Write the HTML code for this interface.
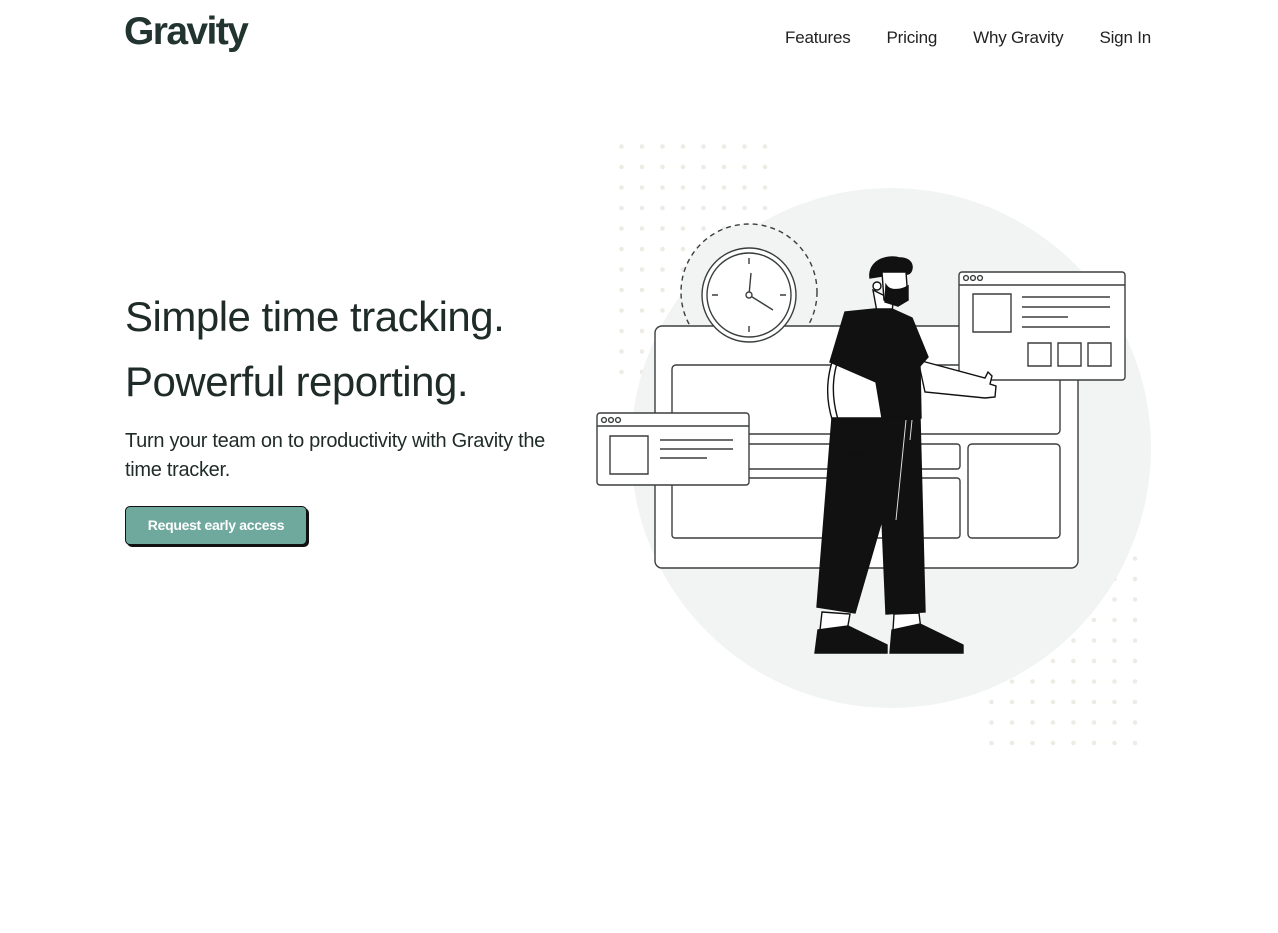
<!DOCTYPE html>
<html><head><meta charset="utf-8"><style>
*{margin:0;padding:0;box-sizing:border-box}
body{width:1278px;height:933px;background:#fff;font-family:"Liberation Sans",sans-serif;color:#1f2b28;position:relative;overflow:hidden}
.logo{position:absolute;left:124px;top:10px;font-size:39px;font-weight:bold;color:#223430;letter-spacing:-1.6px}
nav{position:absolute;top:28px;right:127px;display:flex;gap:36px;font-size:17px;color:#222}
nav a{color:#222;text-decoration:none;letter-spacing:-0.2px}
h1{position:absolute;left:125px;font-weight:normal;font-size:42px;letter-spacing:-0.5px;color:#1f2b28}
.p{position:absolute;left:125px;top:427px;width:440px;font-size:20px;line-height:29px;letter-spacing:-0.3px;color:#1f2b28}
.btn{position:absolute;left:125px;top:506px;width:182px;height:39px;background:#6fa89d;border:1.5px solid #111;border-radius:5px;box-shadow:2px 2px 0 #111;color:#fff;font-weight:bold;font-size:14px;text-align:center;line-height:36px;letter-spacing:-0.3px}
svg{position:absolute;left:0;top:0}
</style></head><body>
<div class="logo">Gravity</div>
<nav><a>Features</a><a>Pricing</a><a>Why Gravity</a><a>Sign In</a></nav>
<h1 style="top:293px">Simple time tracking.</h1>
<h1 style="top:358px">Powerful reporting.</h1>
<div class="p">Turn your team on to productivity with Gravity the time tracker.</div>
<div class="btn">Request early access</div>
<svg width="1278" height="933" viewBox="0 0 1278 933">
<defs>
<pattern id="d" x="619" y="144" width="20.5" height="20.5" patternUnits="userSpaceOnUse"><circle cx="2.5" cy="2.5" r="2.3" fill="#eeebe5"/></pattern>
<pattern id="d2" x="989" y="556" width="20.5" height="20.5" patternUnits="userSpaceOnUse"><circle cx="2.5" cy="2.5" r="2.3" fill="#eeebe5"/></pattern>
</defs>
<rect x="619" y="144" width="150" height="240" fill="url(#d)"/>
<polygon points="1110,556 1140,556 1140,746 989,746 989,660 1110,600" fill="url(#d2)"/>
<circle cx="891" cy="448" r="260" fill="#f1f4f3"/>
<g fill="none" stroke="#3a3f3d" stroke-width="1.4">
<circle cx="749" cy="292" r="68" stroke-dasharray="5 4" fill="#f1f4f3"/>
<rect x="655" y="326" width="423" height="242" rx="7" fill="#fff"/>
<rect x="672" y="365" width="388" height="69" rx="4"/>
<rect x="672" y="444" width="288" height="25" rx="3"/>
<rect x="672" y="478" width="288" height="60" rx="3"/>
<rect x="968" y="444" width="92" height="94" rx="4"/>
<circle cx="749" cy="295" r="47" fill="#fff"/>
<circle cx="749" cy="295" r="42"/>
<path d="M749 258v6M749 326v6M712 295h6M780 295h6M749 295l2-22M749 295l24 15"/>
<circle cx="749" cy="295" r="3" fill="#fff"/>
<rect x="597" y="413" width="152" height="72" rx="3" fill="#fff"/>
<path d="M597 426h152M610 436h38v38h-38zM660 440h73M660 449h73M660 458h47"/>
<circle cx="604" cy="420" r="2.4"/><circle cx="611" cy="420" r="2.4"/><circle cx="618" cy="420" r="2.4"/>
<rect x="959" y="272" width="166" height="108" rx="3" fill="#fff"/>
<path d="M959 285h166M973 294h38v38h-38zM1022 297h88M1022 307h88M1022 317h46M1022 327h88M1028 343h23v23h-23zM1058 343h23v23h-23zM1088 343h23v23h-23z"/>
<circle cx="966" cy="278" r="2.4"/><circle cx="973" cy="278" r="2.4"/><circle cx="980" cy="278" r="2.4"/>
</g>
<g stroke="#111" stroke-width="1.4">
<path d="M918 360 L985 378 L988 372 L992 376 L990 384 L996 386 L995 397 L985 398 L925 392 Z" fill="#fff"/>
<path d="M838 360 C828 390 835 420 850 448 L862 455 L870 475 L855 470 L848 452 C830 425 822 395 832 362Z" fill="#fff"/>
<path d="M873 290 L877 312 L892 316 L893 300Z" fill="#fff"/>
<path d="M845 312 L830 362 L876 382 L882 418 L921 418 L920 366 L928 357 L912 318 L892 309 L875 309Z" fill="#111"/>
<path d="M832 418 L920 418 L925 612 L886 614 L882 520 L855 613 L817 607 Z" fill="#111"/>
<path d="M822 612 L850 614 L847 631 L820 630Z M894 614 L919 613 L921 630 L893 630Z" fill="#fff"/>
<path d="M818 630 L848 626 L887 645 L887 653 L815 653Z M892 630 L920 624 L963 645 L963 653 L890 653Z" fill="#111"/>
<path d="M870 278 C868 262 885 254 900 258 C915 258 914 272 908 274 L882 276Z" fill="#111"/>
<path d="M882 272 L906 272 L908 300 L898 306 L884 300Z" fill="#fff"/>
<path d="M886 285 C890 292 902 290 908 286 L908 300 L898 306 L885 302Z" fill="#111"/>
<circle cx="877" cy="286" r="4" fill="#fff"/>
<rect x="848" y="445" width="16" height="10" fill="#111"/>
</g>
<path d="M906 420 L896 520 M912 420 l-2 20" stroke="#ddd" stroke-width="1" fill="none"/>
</svg>
</body></html>
